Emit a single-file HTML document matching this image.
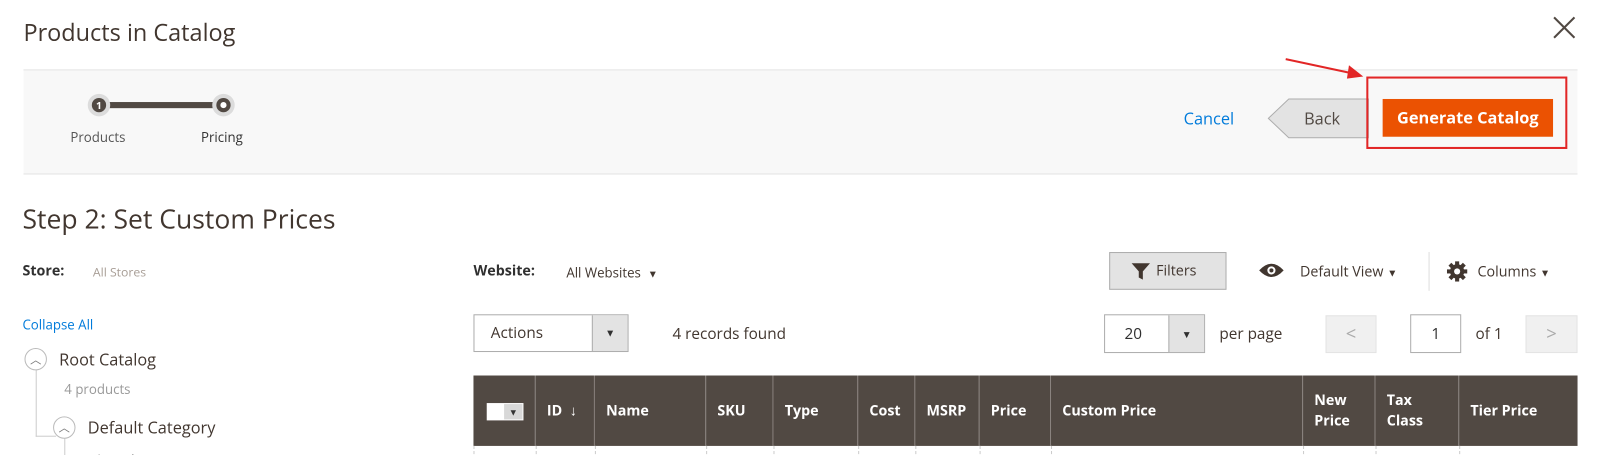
<!DOCTYPE html>
<html><head><meta charset="utf-8"><style>
*{box-sizing:border-box;margin:0;padding:0}
html,body{width:1600px;height:455px;overflow:hidden;background:#fff}
body{font-family:"Open Sans","Liberation Sans",sans-serif;color:#303030;position:relative}
#w{position:absolute;left:0;top:0;width:1568px;height:446px;transform:scale(1.0204);transform-origin:0 0}
.a{position:absolute}
.th{position:absolute;top:368px;height:69px;background:#514943;color:#fff;font-weight:bold;font-size:14px;border-right:1px solid #8a837f;display:flex;align-items:center;padding-left:11px;line-height:20px}
.vl{position:absolute;top:437px;height:18px;border-left:1px dashed #ccc}
</style></head><body><div id="w">
<div class="a" style="left:23px;top:15px;font-size:23px;color:#41362f">Products in Catalog</div>
<svg class="a" style="left:1521px;top:15px" width="24" height="24"><path d="M2 2L22 22M22 2L2 22" stroke="#514943" stroke-width="2"/></svg>
<div class="a" style="left:23px;top:68px;width:1523px;height:103px;background:#f8f8f8;border-top:1px solid #e3e3e3;border-bottom:1px solid #e3e3e3"></div>
<div class="a" style="left:96px;top:100px;width:124px;height:6px;background:#514943"></div>
<div class="a" style="left:86px;top:92px;width:22px;height:22px;border-radius:50%;background:#dcdcdc"></div>
<div class="a" style="left:90px;top:96px;width:14px;height:14px;border-radius:50%;background:#514943;color:#fff;font-size:10px;font-weight:bold;text-align:center;line-height:14px">1</div>
<div class="a" style="left:208px;top:92px;width:22px;height:22px;border-radius:50%;background:#dcdcdc"></div>
<div class="a" style="left:212px;top:96px;width:14px;height:14px;border-radius:50%;background:#514943"></div>
<div class="a" style="left:216px;top:100px;width:6px;height:6px;border-radius:50%;background:#fff"></div>
<div class="a" style="left:69px;top:125px;font-size:13px;color:#555">Products</div>
<div class="a" style="left:197px;top:125px;font-size:13px;color:#333">Pricing</div>
<div class="a" style="left:1160px;top:105px;font-size:16px;color:#007bdb">Cancel</div>
<svg class="a" style="left:1242px;top:96px" width="100" height="40"><path d="M21 1H99V39H21L1 20Z" fill="#e3e3e3" stroke="#adadad"/></svg>
<div class="a" style="left:1278px;top:105px;font-size:16px;color:#514943">Back</div>
<div class="a" style="left:1339px;top:75px;width:197px;height:71px;border:2px solid #e22626"></div>
<div class="a" style="left:1355px;top:97px;width:167px;height:37px;background:#eb5202;color:#fff;font-size:16px;font-weight:bold;text-align:center;line-height:37px">Generate Catalog</div>
<svg class="a" style="left:1258px;top:55px" width="80" height="25"><path d="M2 3L68 17" stroke="#e22626" stroke-width="2"/><path d="M78 20L64 9L62 22Z" fill="#e22626"/></svg>
<div class="a" style="left:22px;top:196px;font-size:26px;color:#41362f">Step 2: Set Custom Prices</div>
<div class="a" style="left:22px;top:256px;font-size:14px;font-weight:bold">Store:</div>
<div class="a" style="left:91px;top:258px;font-size:12px;color:#a79d95">All Stores</div>
<div class="a" style="left:22px;top:309px;font-size:13px;color:#007bdb">Collapse All</div>
<div class="a" style="left:35px;top:362px;height:66px;border-left:1px solid #ccc"></div>
<div class="a" style="left:35px;top:427px;width:20px;border-top:1px solid #ccc"></div>
<div class="a" style="left:63px;top:428px;height:27px;border-left:1px solid #ccc"></div>
<div class="a" style="left:24px;top:341px;width:22px;height:22px;border-radius:50%;border:1px solid #bbb;background:#fff;font-size:11px;text-align:center;line-height:22px;color:#777">︿</div>
<div class="a" style="left:58px;top:341px;font-size:16px;color:#41362f">Root Catalog</div>
<div class="a" style="left:63px;top:372px;font-size:13px;color:#999">4 products</div>
<div class="a" style="left:52px;top:408px;width:22px;height:22px;border-radius:50%;border:1px solid #bbb;background:#fff;font-size:11px;text-align:center;line-height:22px;color:#777">︿</div>
<div class="a" style="left:86px;top:408px;font-size:16px;color:#41362f">Default Category</div>
<div class="a" style="left:92px;top:441px;font-size:13px;color:#999">4 products</div>
<div class="a" style="left:464px;top:256px;font-size:14px;font-weight:bold">Website:</div>
<div class="a" style="left:555px;top:258px;font-size:13px;color:#41362f">All Websites &nbsp;<span style="font-size:10px">▼</span></div>
<div class="a" style="left:1087px;top:247px;width:115px;height:37px;background:#e3e3e3;border:1px solid #adadad;font-size:14px;color:#41362f;line-height:35px;padding-left:45px">Filters</div>
<svg class="a" style="left:1108px;top:257px" width="20" height="18"><path d="M1 1H19L12 9V17L8 15V9Z" fill="#41362f"/></svg>
<svg class="a" style="left:1233px;top:256px" width="26" height="18"><path d="M1 9Q13 -4 25 9Q13 22 1 9Z" fill="#41362f"/><circle cx="13" cy="9" r="4" fill="#fff"/><circle cx="13" cy="9" r="2" fill="#41362f"/></svg>
<div class="a" style="left:1274px;top:257px;font-size:14px;color:#41362f">Default View <span style="font-size:10px">▼</span></div>
<div class="a" style="left:1400px;top:247px;height:38px;border-left:1px solid #ddd"></div>
<svg class="a" style="left:1418px;top:256px" width="20" height="20" viewBox="0 0 20 20"><g fill="#41362f"><circle cx="10" cy="10" r="7"/><rect x="8" y="0" width="4" height="20"/><rect x="0" y="8" width="20" height="4"/><rect x="8" y="0" width="4" height="20" transform="rotate(45 10 10)"/><rect x="8" y="0" width="4" height="20" transform="rotate(-45 10 10)"/></g><circle cx="10" cy="10" r="3" fill="#fff"/></svg>
<div class="a" style="left:1448px;top:257px;font-size:14px;color:#41362f">Columns <span style="font-size:10px">▼</span></div>
<div class="a" style="left:464px;top:308px;width:152px;height:37px;border:1px solid #adadad;background:#fff;font-size:15px;color:#41362f;line-height:35px;padding-left:16px">Actions</div>
<div class="a" style="left:580px;top:309px;width:35px;height:35px;background:#e3e3e3;border-left:1px solid #adadad;font-size:10px;text-align:center;line-height:35px">▼</div>
<div class="a" style="left:659px;top:317px;font-size:15px;color:#41362f">4 records found</div>
<div class="a" style="left:1082px;top:308px;width:99px;height:38px;border:1px solid #adadad;font-size:15px;line-height:36px;padding-left:19px">20</div>
<div class="a" style="left:1145px;top:309px;width:35px;height:36px;background:#e3e3e3;border-left:1px solid #adadad;font-size:10px;text-align:center;line-height:36px">▼</div>
<div class="a" style="left:1195px;top:317px;font-size:15px;color:#41362f">per page</div>
<div class="a" style="left:1299px;top:309px;width:50px;height:37px;background:#f0f0f0;border:1px solid #e3e3e3;color:#aaa;text-align:center;line-height:35px;font-size:18px">&lt;</div>
<div class="a" style="left:1382px;top:308px;width:50px;height:38px;border:1px solid #adadad;font-size:15px;text-align:center;line-height:36px">1</div>
<div class="a" style="left:1446px;top:317px;font-size:15px;color:#41362f">of 1</div>
<div class="a" style="left:1495px;top:309px;width:51px;height:37px;background:#f0f0f0;border:1px solid #e3e3e3;color:#aaa;text-align:center;line-height:35px;font-size:18px">&gt;</div>
<div class="th" style="left:464px;width:61px"></div>
<div class="a" style="left:477px;top:395px;width:36px;height:17px;background:#fff"></div>
<div class="a" style="left:494px;top:396px;width:18px;height:15px;background:#d8d8d8;font-size:9px;color:#333;text-align:center;line-height:15px">▼</div>
<div class="th" style="left:525px;width:58px">ID &nbsp;<span style="font-weight:normal">↓</span></div>
<div class="th" style="left:583px;width:109px">Name</div>
<div class="th" style="left:692px;width:66px">SKU</div>
<div class="th" style="left:758px;width:83px">Type</div>
<div class="th" style="left:841px;width:56px">Cost</div>
<div class="th" style="left:897px;width:63px">MSRP</div>
<div class="th" style="left:960px;width:70px">Price</div>
<div class="th" style="left:1030px;width:247px">Custom Price</div>
<div class="th" style="left:1277px;width:71px">New<br>Price</div>
<div class="th" style="left:1348px;width:82px">Tax<br>Class</div>
<div class="th" style="left:1430px;width:116px;border-right:none">Tier Price</div>
<div class="vl" style="left:464px"></div><div class="vl" style="left:525px"></div><div class="vl" style="left:583px"></div><div class="vl" style="left:692px"></div><div class="vl" style="left:758px"></div><div class="vl" style="left:841px"></div><div class="vl" style="left:897px"></div><div class="vl" style="left:960px"></div><div class="vl" style="left:1030px"></div><div class="vl" style="left:1277px"></div><div class="vl" style="left:1348px"></div><div class="vl" style="left:1430px"></div>
</div></body></html>
